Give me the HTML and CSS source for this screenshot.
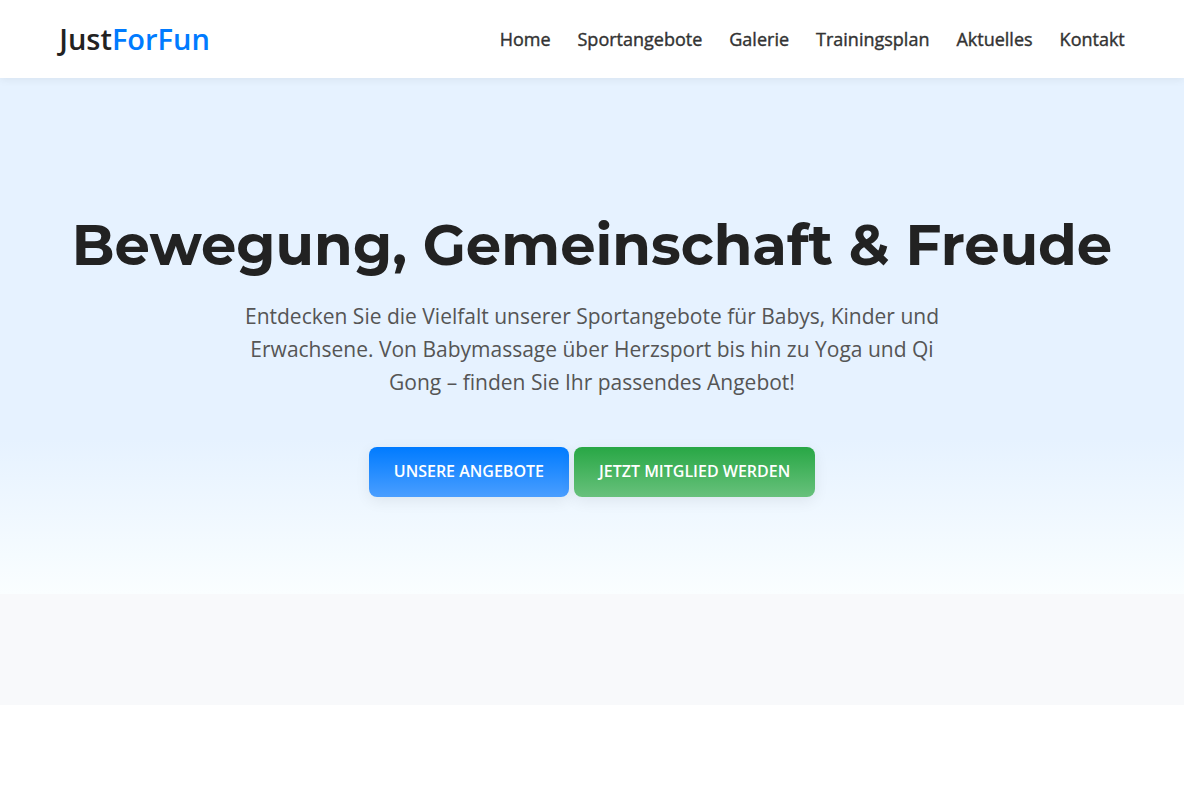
FILE: index.html
```html
<!DOCTYPE html>
<html lang="de">

<head>
  <meta charset="UTF-8">
  <meta name="viewport" content="width=device-width, initial-scale=1.0">
  <title>JustForFun</title>
  <link rel="stylesheet" href="styles.css">
</head>

<body>

  <!-- Kopfbereich -->
  <header class="header">
    <div class="container">
      <a href="#" class="logo">Just<span>ForFun</span></a>
      <nav>
        <ul class="nav-links">
          <li><a href="#">Home</a></li>
          <li><a href="#">Sportangebote</a></li>
          <li><a href="#">Galerie</a></li>
          <li><a href="#">Trainingsplan</a></li>
          <li><a href="#">Aktuelles</a></li>
          <li><a href="#">Kontakt</a></li>
        </ul>
      </nav>
    </div>
  </header>

  <main>
    <!-- Hero -->
    <section class="hero">
      <h1>Bewegung, Gemeinschaft &amp; Freude</h1>
      <p>Entdecken Sie die Vielfalt unserer Sportangebote für Babys, Kinder und Erwachsene. Von Babymassage über Herzsport bis hin zu Yoga und Qi Gong – finden Sie Ihr passendes Angebot!</p>
      <div class="hero-buttons">
        <button type="button" class="btn btn-primary">Unsere Angebote</button>
        <button type="button" class="btn btn-success">Jetzt Mitglied werden</button>
      </div>
    </section>

    <section class="section-light"></section>
  </main>

</body>

</html>
```

FILE: styles.css
```css
* {
  box-sizing: border-box;
  margin: 0;
  padding: 0;
}

body {
  font-family: "Open Sans", sans-serif;
  color: #222;
  background: #fff;
  padding-right: 16px;
}

/* Header */
.header {
  position: relative;
  z-index: 10;
  background: #fff;
  padding: 16px 0;
  box-shadow: 0 2px 8px rgba(0, 0, 0, 0.06);
  clip-path: inset(0 0 -20px 0);
}

.container {
  width: 90%;
  margin: 0 auto;
  display: flex;
  justify-content: space-between;
  align-items: center;
}

.logo {
  font-size: 29px;
  line-height: 46px;
  font-weight: 600;
  color: #222;
  text-decoration: none;
}

.logo span {
  color: #007bff;
}

.nav-links {
  display: flex;
  gap: 27px;
  list-style: none;
}

.nav-links a {
  font-size: 18px;
  line-height: 28px;
  color: #333;
  -webkit-text-stroke: 0.4px #333;
  text-decoration: none;
}

/* Hero */
.hero {
  padding: 128px 24px 97px;
  text-align: center;
  background: linear-gradient(to bottom, #e6f2ff 70%, #fafeff);
}

.hero h1 {
  font-family: "Montserrat", "Inter", sans-serif;
  font-size: 56px;
  line-height: 78px;
  font-weight: 700;
  margin-bottom: 16px;
}

.hero p {
  max-width: 700px;
  margin: 0 auto 48px;
  font-size: 21px;
  line-height: 33px;
  color: #555;
}

.hero-buttons {
  display: flex;
  flex-wrap: wrap;
  justify-content: center;
  gap: 5px;
}

.btn {
  padding: 12px 25px 14px;
  border: none;
  border-radius: 8px;
  font-family: inherit;
  font-size: 16px;
  line-height: 24px;
  font-weight: 600;
  text-transform: uppercase;
  color: #fff;
  cursor: pointer;
  box-shadow: 0 4px 15px rgba(0, 0, 0, 0.07);
}

.btn-primary {
  background: linear-gradient(to bottom, #007bff, #4a9eff);
}

.btn-success {
  background: linear-gradient(to bottom, #28a745, #68c17c);
}

.section-light {
  padding: 55px 0 56px;
  background: #f8f9fb;
}
```
